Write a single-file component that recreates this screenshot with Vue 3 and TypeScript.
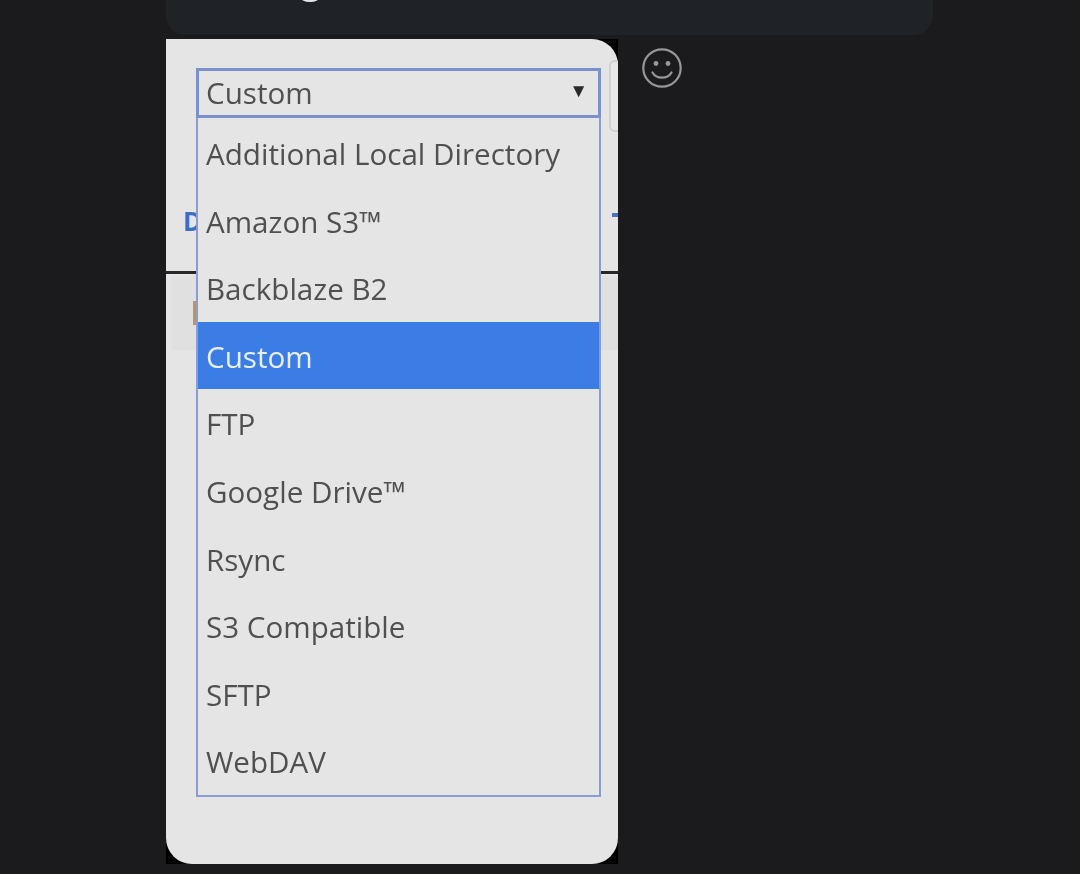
<script setup lang="ts">
const options: string[] = [
  'Additional Local Directory',
  'Amazon S3™',
  'Backblaze B2',
  'Custom',
  'FTP',
  'Google Drive™',
  'Rsync',
  'S3 Compatible',
  'SFTP',
  'WebDAV',
]
const selected = 'Custom'
</script>

<template>
  <div class="page">
    <div class="bubble"><span class="dot"></span></div>
    <div class="row">
      <div class="panel-frame">
        <div class="panel">
          <div class="controls">
            <div class="select">
              <span class="select-text">{{ selected }}</span>
              <span class="arrow">▼</span>
            </div>
            <div class="side-control"></div>
          </div>
          <div class="tabs">
            <span class="tab-blue">D</span>
            <span class="tab-sliver"></span>
          </div>
          <div class="notice"><span class="notice-bar"></span></div>

          <ul class="dropdown">
            <li v-for="opt in options" :key="opt" class="option" :class="{ active: opt === selected }">
              <span class="option-text">{{ opt }}</span>
            </li>
          </ul>
        </div>
      </div>
      <svg class="smiley" width="42" height="42" viewBox="0 0 42 42" fill="none" aria-hidden="true">
        <circle cx="21" cy="21" r="18.7" stroke="#97989b" stroke-width="2.2" />
        <circle cx="15" cy="16.5" r="2.4" fill="#97989b" />
        <circle cx="27" cy="16.5" r="2.4" fill="#97989b" />
        <path d="M11.5 25.5c2 3.6 5.4 5.2 9.5 5.2s7.5-1.6 9.5-5.2" stroke="#97989b" stroke-width="2.2" stroke-linecap="round" />
      </svg>
    </div>
  </div>
</template>

<style scoped>
.page {
  width: 1080px;
  height: 874px;
  overflow: hidden;
  background: #1b1b1d;
  font-family: "Open Sans", "Liberation Sans", sans-serif;
}
.bubble {
  position: relative;
  width: 767px;
  height: 35px;
  margin-left: 166px;
  margin-bottom: 4px;
  background: #1f2327;
  border-radius: 0 0 20px 20px;
}
.dot {
  position: absolute;
  left: 134px;
  top: -9px;
  width: 20px;
  height: 11px;
  border-radius: 50%;
  background: #e6e6e6;
  filter: blur(0.6px);
}
.row {
  display: flex;
  align-items: flex-start;
}
.panel-frame {
  width: 452px;
  height: 825px;
  margin-left: 166px;
  background: #000;
}
.panel {
  position: relative;
  height: 100%;
  overflow: hidden;
  background: #e5e5e5;
  border-radius: 0 26px 26px 26px;
}
.controls {
  display: flex;
  align-items: flex-start;
  gap: 8px;
  padding: 29px 0 0 30px;
}
.select {
  flex: none;
  box-sizing: border-box;
  display: flex;
  justify-content: space-between;
  align-items: center;
  width: 405px;
  height: 50px;
  padding: 0 10px 0 7px;
  border: 3px solid #7c90cb;
  color: #505050;
  font-size: 29.6px;
  line-height: 42px;
}
.select-text {
  filter: blur(0.7px);
}
.arrow {
  color: #2a2a2a;
  font-size: 19px;
  line-height: 20px;
  margin-top: -6px;
  filter: blur(0.4px);
}
.side-control {
  flex: none;
  box-sizing: border-box;
  width: 20px;
  height: 72px;
  margin-top: -8px;
  border: 2px solid #d2d2d2;
  border-radius: 6px;
  background: #e8e8e8;
}
.tabs {
  position: relative;
  box-sizing: border-box;
  height: 135px;
  margin-top: 7px;
  padding: 64px 0 0 17px;
  border-bottom: 3px solid #28282a;
  color: #3b6fc4;
  font-size: 26px;
  font-weight: 700;
  line-height: 36px;
  filter: blur(0.5px);
}
.tab-sliver {
  position: absolute;
  right: 0;
  top: 74px;
  width: 6px;
  height: 4px;
  background: #4a6fc4;
}
.notice {
  display: flex;
  align-items: center;
  height: 74px;
  margin: 2px 0 0 5px;
  padding-left: 22px;
  background: #e0e0e0;
}
.notice-bar {
  width: 4px;
  height: 24px;
  background: #c8915a;
  filter: blur(0.5px);
}
.dropdown {
  position: absolute;
  left: 30px;
  top: 79px;
  box-sizing: border-box;
  width: 405px;
  height: 679px;
  margin: 0;
  padding: 1px 0 0;
  list-style: none;
  background: #e5e5e5;
  border: 2px solid #8a9dd2;
  border-top: 0;
}
.option {
  height: 67.6px;
  padding-left: 8px;
  color: #505050;
  font-size: 29.6px;
  line-height: 70px;
}
.option-text {
  display: inline-block;
  filter: blur(0.7px);
}
.option.active {
  background: #3b7de4;
  color: #e8effa;
}
.smiley {
  margin: 8px 0 0 23px;
  filter: blur(0.4px);
}
</style>
